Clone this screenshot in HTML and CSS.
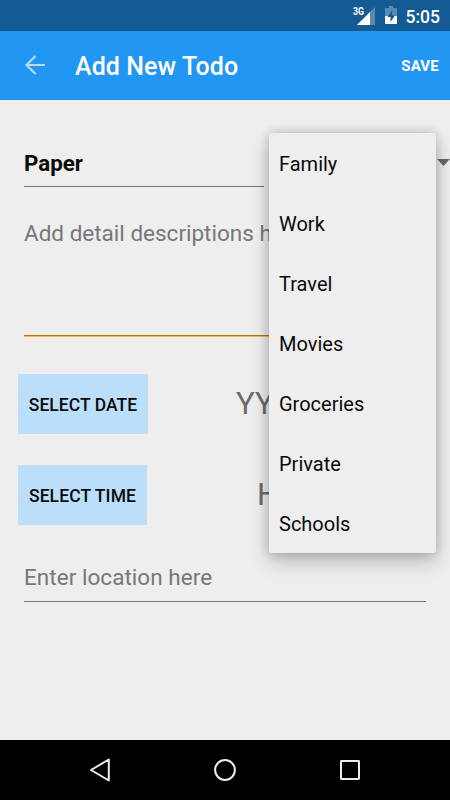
FILE: index.html
```html
<!DOCTYPE html>
<html lang="en">
<head>
<meta charset="utf-8">
<title>Add New Todo</title>
<link rel="stylesheet" href="styles.css">
</head>
<body>
<div class="screen">
  <div class="status-bar">
    <svg class="signal" width="24" height="20" viewBox="0 0 24 20">
      <path d="M22 1v18H4z" fill="#5b89b0"/>
      <path d="M17 6v13H4z" fill="#fff"/>
      <text class="network" x="0" y="9" textLength="11" lengthAdjust="spacingAndGlyphs">3G</text>
    </svg>
    <svg class="battery" width="12" height="18" viewBox="0 0 12 18">
      <path d="M4 0h4v2h3q1 0 1 1v7H0V3q0-1 1-1h3z" fill="#5b89b0"/>
      <path d="M0 10h12v7q0 1-1 1H1q-1 0-1-1z" fill="#fff"/>
      <path d="M7 4.500L2.500 11H5.500v5L10 9.500H7z" fill="#145b94"/>
    </svg>
    <span class="clock">5:05</span>
  </div>
  <header class="app-bar">
    <svg class="back" width="22" height="22" viewBox="0 0 22 22">
      <path d="M21 11H2.500M11.500 2L2.500 11l9 9" fill="none" stroke="#b5dbfb" stroke-width="2.200"/>
    </svg>
    <h1 class="title">Add New Todo</h1>
    <span class="save">SAVE</span>
  </header>
  <main class="form">
    <div class="name-row">
      <div class="name">Paper</div>
      <svg class="caret" width="13" height="7" viewBox="0 0 13 7"><path d="M0 0h13L6.500 7z" fill="#686868"/></svg>
    </div>
    <div class="details">Add detail descriptions here</div>
    <div class="pick-row">
      <div class="button date">SELECT DATE</div>
      <span class="value">YYYY</span>
    </div>
    <div class="pick-row time-row">
      <div class="button time">SELECT TIME</div>
      <span class="value time-value">HH</span>
    </div>
    <div class="location">Enter location here</div>
  </main>
  <ul class="menu">
    <li>Family</li>
    <li>Work</li>
    <li>Travel</li>
    <li>Movies</li>
    <li>Groceries</li>
    <li>Private</li>
    <li>Schools</li>
  </ul>
  <nav class="nav-bar">
    <svg width="24" height="26" viewBox="0 0 24 26"><path d="M20.800 2.500v21L3 13z"/></svg>
    <svg width="24" height="26" viewBox="0 0 24 26"><circle cx="12" cy="13" r="9.900"/></svg>
    <svg width="24" height="26" viewBox="0 0 24 26"><rect x="3" y="4" width="18" height="18" rx=".4"/></svg>
  </nav>
</div>
</body>
</html>
```
FILE: styles.css
```css
* { box-sizing: border-box; }
body { margin: 0; font-family: Roboto, "Liberation Sans", sans-serif; }
.screen {
  position: relative;
  display: flex;
  flex-direction: column;
  width: 450px;
  height: 800px;
  overflow: hidden;
  background: #eee;
}
.status-bar {
  display: flex;
  align-items: flex-start;
  justify-content: flex-end;
  height: 31px;
  padding: 6px 10px 0 0;
  background: #145b94;
  color: #fff;
}
.network { font-size: 10.500px; font-weight: 700; fill: #fff; }
.battery { margin: 0 9px 0 8px; }
.clock { font-size: 17.500px; line-height: 22px; font-weight: 500; }
.app-bar {
  display: flex;
  align-items: center;
  height: 69px;
  padding: 0 11px 0 24px;
  background: #2196f3;
  border-bottom: 1px solid #1a8ceb;
  color: #fff;
}
.title { flex: 1; margin: 4px 0 0 29px; font-size: 25px; line-height: 30px; font-weight: 500; letter-spacing: .08px; }
.save { margin-top: 2px; font-size: 15px; font-weight: 700; letter-spacing: .2px; }
.form { flex: 1; padding-top: 46px; }
.name-row { display: flex; height: 41px; }
.name {
  width: 240px;
  margin-left: 24px;
  font-size: 22.300px;
  line-height: 34px;
  font-weight: 700;
  color: #0a0a0a;
  border-bottom: 1px solid #747474;
}
.caret { margin: 13px 0 0 173px; }
.details {
  width: 402px;
  height: 119px;
  margin: 31px 24px 0;
  font-size: 22.500px;
  line-height: 30px;
  color: #777;
  border-bottom: 1px solid #f3b75c;
  box-shadow: inset 0 -1px #b87508;
}
.pick-row { display: flex; height: 60px; margin: 37px 0 0 18px; }
.button {
  height: 60px;
  background: #bbdefb;
  border: 1px solid #c3dcf2;
  color: #0a0a0a;
  font-size: 17.500px;
  line-height: 61px;
  font-weight: 500;
  text-align: center;
  letter-spacing: .05px;
}
.date { width: 130px; }
.time { width: 129px; letter-spacing: .1px; }
.time-row { margin-top: 31px; }
.value { margin-left: 88px; font-size: 31.250px; line-height: 60px; color: #6b6b6b; }
.time-value { margin-left: 110px; }
.location {
  width: 402px;
  height: 47px;
  margin: 30px 24px 0;
  padding-top: 7px;
  font-size: 22.500px;
  line-height: 30px;
  letter-spacing: .04px;
  color: #777;
  border-bottom: 1px solid #747474;
}
.menu {
  position: absolute;
  left: 269px;
  top: 133px;
  width: 167px;
  height: 420px;
  margin: 0;
  padding: 0;
  list-style: none;
  background: #eee;
  border-radius: 2px;
  box-shadow: 0 10px 20px rgba(0, 0, 0, .2), 0 0 12px rgba(0, 0, 0, .2), 0 0 1px rgba(0, 0, 0, .15);
}
.menu li { height: 60px; padding-left: 10px; font-size: 20px; line-height: 63px; color: #0a0a0a; }
.nav-bar {
  display: flex;
  align-items: center;
  justify-content: center;
  gap: 101px;
  height: 60px;
  background: #000;
}
.nav-bar svg { fill: none; stroke: #eee; stroke-width: 2; stroke-linejoin: round; }
```
